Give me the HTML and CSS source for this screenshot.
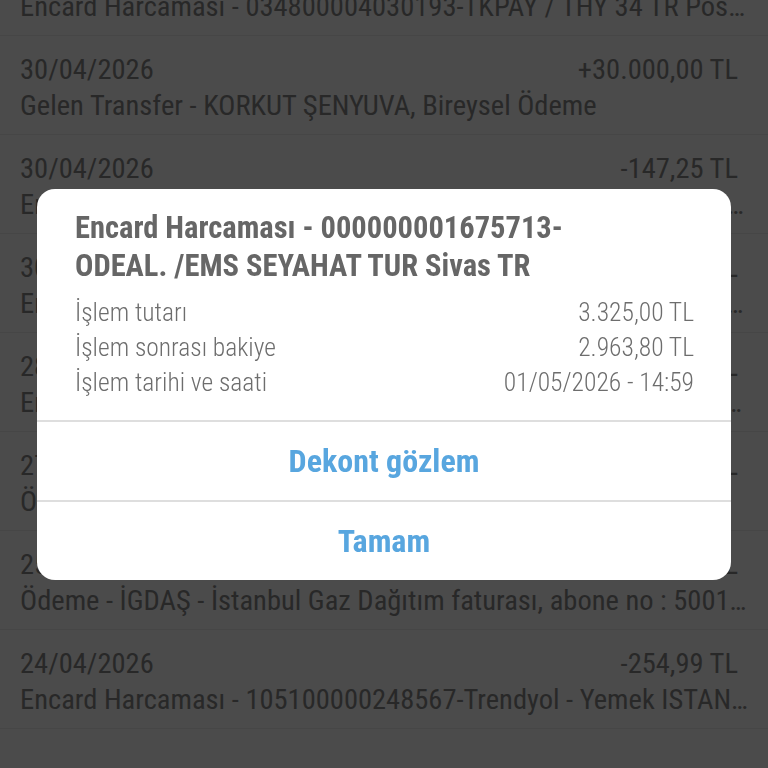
FILE: index.html
```html
<!DOCTYPE html>
<html lang="tr">
<head>
    <meta charset="UTF-8">
    <meta name="viewport" content="width=device-width, initial-scale=1.0">
    <title>Hesap Hareketleri</title>
    <link rel="stylesheet" href="styles.css">
</head>
<body>
    <!-- hesap hareketleri listesi -->
    <ul class="tx-list">
        <li class="tx">
            <div class="tx-top">
                <span class="tx-date">01/05/2026</span>
                <span class="tx-amount">-1.250,00 TL</span>
            </div>
            <div class="tx-desc">Encard Harcaması - 034800004030193-TKPAY / THY 34 TR Pos İstanbul TR</div>
        </li>
        <li class="tx">
            <div class="tx-top">
                <span class="tx-date">30/04/2026</span>
                <span class="tx-amount">+30.000,00 TL</span>
            </div>
            <div class="tx-desc">Gelen Transfer - KORKUT ŞENYUVA, Bireysel Ödeme</div>
        </li>
        <li class="tx">
            <div class="tx-top">
                <span class="tx-date">30/04/2026</span>
                <span class="tx-amount">-147,25 TL</span>
            </div>
            <div class="tx-desc">Encard Harcaması - 000000001642218-MIGROS TICARET A.S. Istanbul TR</div>
        </li>
        <li class="tx">
            <div class="tx-top">
                <span class="tx-date">30/04/2026</span>
                <span class="tx-amount">-89,90 TL</span>
            </div>
            <div class="tx-desc">Encard Harcaması - 000000001638874-GETIR PERAKENDE Istanbul TR</div>
        </li>
        <li class="tx">
            <div class="tx-top">
                <span class="tx-date">28/04/2026</span>
                <span class="tx-amount">-412,50 TL</span>
            </div>
            <div class="tx-desc">Encard Harcaması - 000000001620035-SHELL PETROL Istanbul TR</div>
        </li>
        <li class="tx">
            <div class="tx-top">
                <span class="tx-date">27/04/2026</span>
                <span class="tx-amount">-620,00 TL</span>
            </div>
            <div class="tx-desc">Ödeme - Türk Telekom faturası, hizmet no : 2120456789</div>
        </li>
        <li class="tx">
            <div class="tx-top">
                <span class="tx-date">25/04/2026</span>
                <span class="tx-amount">-731,42 TL</span>
            </div>
            <div class="tx-desc">Ödeme - İGDAŞ - İstanbul Gaz Dağıtım faturası, abone no : 5001238841</div>
        </li>
        <li class="tx">
            <div class="tx-top">
                <span class="tx-date">24/04/2026</span>
                <span class="tx-amount">-254,99 TL</span>
            </div>
            <div class="tx-desc">Encard Harcaması - 105100000248567-Trendyol - Yemek ISTANBUL TR</div>
        </li>
    </ul>

    <!-- işlem detayı penceresi -->
    <div class="overlay">
        <div class="dialog">
            <div class="dialog-body">
                <h2 class="dialog-title">Encard Harcaması - 000000001675713-<br>ODEAL. /EMS SEYAHAT TUR Sivas TR</h2>
                <div class="detail-row">
                    <span>İşlem tutarı</span>
                    <span>3.325,00 TL</span>
                </div>
                <div class="detail-row">
                    <span>İşlem sonrası bakiye</span>
                    <span>2.963,80 TL</span>
                </div>
                <div class="detail-row">
                    <span>İşlem tarihi ve saati</span>
                    <span>01/05/2026 - 14:59</span>
                </div>
            </div>
            <button class="dialog-btn">Dekont gözlem</button>
            <button class="dialog-btn">Tamam</button>
        </div>
    </div>
</body>
</html>
```

FILE: styles.css
```css
body {
    margin: 0;
    font-family: "Roboto Condensed", "Open Sans", sans-serif;
    font-stretch: 75%;
    background-color: #4b4b4b;
    overflow: hidden;
}
.tx-list {
    list-style: none;
    margin: -63px 0 0 0;
    padding: 0;
}
.tx {
    padding: 16px 20px 10px;
    border-bottom: 1px solid #464646;
    color: #282828;
    font-size: 28.5px;
}
.tx-top {
    display: flex;
    justify-content: space-between;
    line-height: 36px;
    padding-right: 10px;
}
.tx-desc {
    line-height: 36px;
    white-space: nowrap;
    overflow: hidden;
    text-overflow: ellipsis;
}
.overlay {
    position: fixed;
    inset: 0;
    display: flex;
    align-items: center;
    justify-content: center;
}
.dialog {
    width: 694px;
    background-color: #fff;
    border-radius: 18px;
    overflow: hidden;
}
.dialog-body {
    padding: 20px 37px 20px 38px;
    color: #6d6d6d;
}
.dialog-title {
    margin: 0 0 10px;
    font-size: 30.5px;
    line-height: 38px;
    font-weight: bold;
    color: #666;
    white-space: nowrap;
}
.detail-row {
    display: flex;
    justify-content: space-between;
    font-size: 25.5px;
    font-weight: 300;
    line-height: 35px;
}
.dialog-btn {
    display: block;
    width: 100%;
    height: 80px;
    border: 0;
    border-top: 2px solid #dedede;
    background: none;
    font-family: inherit;
    font-size: 32px;
    font-weight: bold;
    color: #58a6df;
}
```
